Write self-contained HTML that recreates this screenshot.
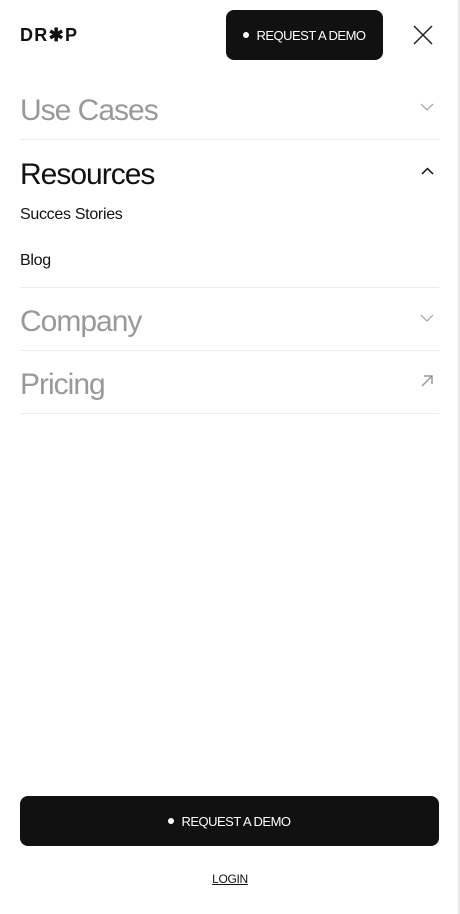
<!DOCTYPE html>
<html><head><style>
*{margin:0;padding:0;box-sizing:border-box}
body{width:460px;height:914px;background:#fff;font-family:"Liberation Sans",Arial,sans-serif;position:relative;overflow:hidden;color:#111}
.edge{position:absolute;right:0;top:0;width:2px;height:914px;background:#e8e8e8}
.logo{position:absolute;left:20px;top:25px;font-weight:bold;font-size:18px;letter-spacing:1.3px}
.btn{position:absolute;background:#111;color:#fff;border-radius:8px;font-size:13px;display:flex;align-items:center;justify-content:center;letter-spacing:-0.5px}
.btn i{width:6px;height:6px;border-radius:50%;background:#fff;margin-right:7px;display:inline-block}
.item{position:absolute;left:20px;font-size:30px;letter-spacing:-1px;line-height:36px}
.gray{color:#999}
.div{position:absolute;left:20px;width:419px;height:1px;background:#ececec}
.sub{position:absolute;left:20px;font-size:16px;letter-spacing:-0.3px}
svg{position:absolute}
</style></head><body>
<div class="edge"></div>
<div class="logo">DR✱P</div>
<div class="btn" style="left:226px;top:10px;width:157px;height:50px"><i></i>REQUEST A DEMO</div>
<svg style="left:413px;top:25px" width="20" height="20" viewBox="0 0 20 20"><path d="M1 1L19 19M19 1L1 19" stroke="#222" stroke-width="1.5"/></svg>
<div class="item gray" style="top:93px">Use Cases</div>
<svg style="left:420px;top:103px" width="14" height="9" viewBox="0 0 14 9"><path d="M1 1L7 7L13 1" stroke="#aaa" stroke-width="1.3" fill="none"/></svg>
<div class="div" style="top:139px"></div>
<div class="item" style="top:157px">Resources</div>
<svg style="left:421px;top:167px" width="13" height="8" viewBox="0 0 13 8"><path d="M1 7L6.5 1.5L12 7" stroke="#111" stroke-width="1.5" fill="none"/></svg>
<div class="sub" style="top:206px">Succes Stories</div>
<div class="sub" style="top:252px">Blog</div>
<div class="div" style="top:287px"></div>
<div class="item gray" style="top:304px">Company</div>
<svg style="left:420px;top:314px" width="14" height="9" viewBox="0 0 14 9"><path d="M1 1L7 7L13 1" stroke="#aaa" stroke-width="1.3" fill="none"/></svg>
<div class="div" style="top:350px"></div>
<div class="item gray" style="top:367px">Pricing</div>
<svg style="left:421px;top:375px" width="12" height="12" viewBox="0 0 12 12"><path d="M1 11L11 1M3 1H11V9" stroke="#999" stroke-width="1.5" fill="none"/></svg>
<div class="div" style="top:413px"></div>
<div class="btn" style="left:20px;top:796px;width:419px;height:50px"><i></i>REQUEST A DEMO</div>
<div style="position:absolute;left:0;width:460px;top:872px;text-align:center;font-size:12px;letter-spacing:-0.3px;text-decoration:underline">LOGIN</div>
</body></html>
